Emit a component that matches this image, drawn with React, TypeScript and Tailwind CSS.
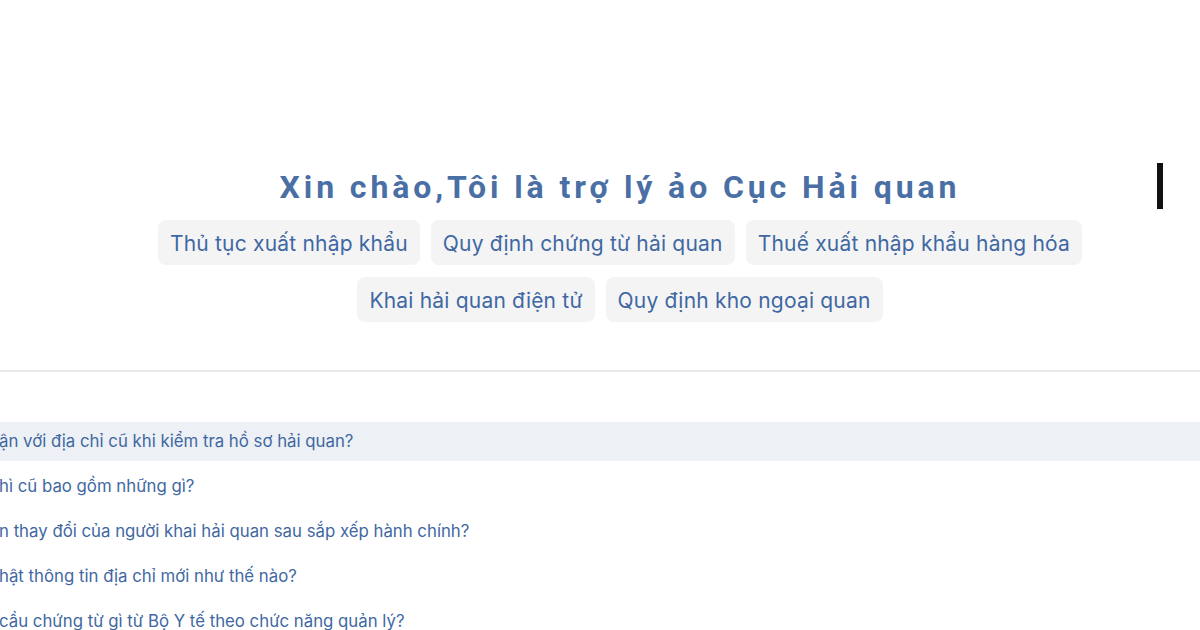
import React from "react";

const chipsRow1 = ["Thủ tục xuất nhập khẩu", "Quy định chứng từ hải quan", "Thuế xuất nhập khẩu hàng hóa"];
const chipsRow2 = ["Khai hải quan điện tử", "Quy định kho ngoại quan"];

const questions = [
  "ận với địa chỉ cũ khi kiểm tra hồ sơ hải quan?",
  "hì cũ bao gồm những gì?",
  "n thay đổi của người khai hải quan sau sắp xếp hành chính?",
  "hật thông tin địa chỉ mới như thế nào?",
  "cầu chứng từ gì từ Bộ Y tế theo chức năng quản lý?",
];

function Chip({ label }: { label: string }) {
  return (
    <div className="h-[45px] px-3 flex items-center rounded-lg bg-[#f4f4f5] text-[21px] tracking-[0.2px] text-[#3f68a2] whitespace-nowrap">
      <span className="mt-[2px]">{label}</span>
    </div>
  );
}

export default function App() {
  return (
    <div
      className="relative w-[1200px] h-[630px] overflow-hidden bg-white"
      style={{ fontFamily: "Inter, 'Noto Sans', sans-serif" }}
    >
      <div className="h-[370px] flex flex-col items-center pl-[40px] pt-[167px]">
        <h1
          className="h-[40px] leading-[40px] text-[32px] font-bold tracking-[3.9px] text-[#4a6fa5] whitespace-nowrap"
          style={{ fontFamily: "Roboto, 'Liberation Sans', sans-serif" }}
        >
          Xin chào,Tôi là trợ lý ảo Cục Hải quan
        </h1>
        <div className="mt-[13px] flex gap-[11px]">
          {chipsRow1.map((c) => (
            <Chip key={c} label={c} />
          ))}
        </div>
        <div className="mt-[12px] flex gap-[11px]">
          {chipsRow2.map((c) => (
            <Chip key={c} label={c} />
          ))}
        </div>
      </div>
      <div className="h-[2px] bg-[#e8e8ea]" />
      <div className="pt-[50px] flex flex-col gap-[6px]">
        {questions.map((q, i) => (
          <div
            key={q}
            className={
              "h-[39px] flex items-center text-[16.8px] text-[#3f68a2] whitespace-nowrap " +
              (i === 0 ? "bg-[#edf0f4]" : "")
            }
          >
            <span className="-ml-[1px]">{q}</span>
          </div>
        ))}
      </div>
      <div className="absolute left-[1157px] top-[163px] w-[6px] h-[46px] bg-[#111111]" />
    </div>
  );
}
